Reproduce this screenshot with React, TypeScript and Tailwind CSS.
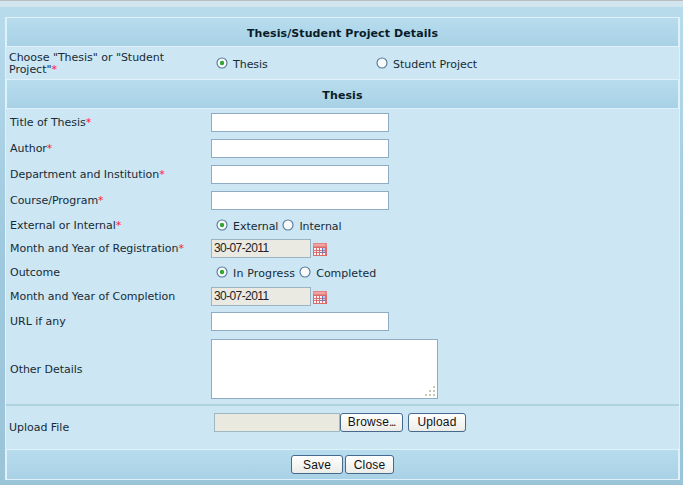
import type { ReactNode } from "react";

const BAND = "shrink-0 flex items-center justify-center bg-gradient-to-b from-[#b7dcee] to-[#a9d1e5] border border-[#dff2fb]";

function Radio({ checked = false }: { checked?: boolean }) {
  return (
    <svg className="shrink-0" width="12" height="12" viewBox="0 0 12 12">
      <circle cx="6" cy="6" r="5" fill="#f8fafa" stroke="#54779a" strokeWidth="1.1" />
      {checked && <circle cx="6" cy="6" r="2.2" fill="#35a535" />}
    </svg>
  );
}

function Calendar() {
  return (
    <svg className="ml-[2px] mt-[3px] shrink-0" width="14" height="13" viewBox="0 0 14 13">
      <rect width="14" height="13" fill="#d96c6c" />
      <rect width="14" height="4" fill="#e58484" />
      <rect x="1" y="1" width="11" height="2" fill="#f0a3a0" />
      <path d="M1 5h2v2H1zM4 5h2v2H4zM7 5h2v2H7zM1 8h2v1H1zM4 8h2v1H4zM7 8h2v1H7zM1 10h2v2H1zM4 10h2v2H4zM7 10h2v2H7zM10 10h2v2h-2z" fill="#fff5f5" />
      <path d="M10 5h2v2h-2zM10 8h2v1h-2z" fill="#c3c9ee" />
      <path d="M9 5h1v5H9zM7 9h5v1H7z" fill="#7476b5" />
    </svg>
  );
}

function Row({ label, required, height, children }: { label: string; required?: boolean; height: string; children: ReactNode }) {
  return (
    <div className={`flex shrink-0 items-center ${height}`}>
      <div className="w-[205px] shrink-0 pt-[2px] pl-[4px] whitespace-nowrap">
        {label}
        {required && <span className="text-[#ff1a35]">*</span>}
      </div>
      {children}
    </div>
  );
}

function TextBox() {
  return <input className="block h-[19px] w-[178px] border border-[#8eacc4] bg-white outline-none" />;
}

function DateBox() {
  return (
    <>
      <div className="flex h-[19px] w-[100px] items-center border border-[#9bb3c2] bg-[#eaeae2] pl-[2px] font-['Liberation_Sans',sans-serif] text-[12px] leading-none tracking-[-0.6px] text-[#222]">
        30-07-2011
      </div>
      <Calendar />
    </>
  );
}

function Button({ children, width }: { children: ReactNode; width: string }) {
  return (
    <button className={`h-[19px] shrink-0 rounded-[3px] border border-[#47698d] bg-gradient-to-b from-white to-[#ececE8] font-['Liberation_Sans',sans-serif] text-[12px] leading-none tracking-[0.2px] text-[#111] ${width}`}>
      {children}
    </button>
  );
}

export default function App() {
  return (
    <div className="flex h-[485px] w-[683px] flex-col overflow-hidden bg-gradient-to-b from-[#b9dcec] via-[#9fc9de] to-[#9bc4d8] font-['DejaVu_Sans',Verdana,sans-serif] text-[11px] leading-[12px] tracking-[-0.03px] text-[#172b36]">
      <div className="h-px shrink-0 bg-[#b9bdbf]" />
      <div className="h-[6px] shrink-0 bg-[#d2e5ef]" />
      <main className="mt-[10px] ml-[5px] flex h-[463px] w-[675px] shrink-0 flex-col border-x border-[#dff2fb] bg-[#cce6f3]">
        <h1 className={`h-[30px] pt-[3px] font-bold tracking-[0.1px] text-[#091c28] ${BAND}`}>Thesis/Student Project Details</h1>
        <section className="flex h-[32px] shrink-0 items-center">
          <div className="w-[210px] shrink-0 pt-[2px] pl-[3px]">
            Choose "Thesis" or "Student<br />Project"<span className="text-[#ff1a35]">*</span>
          </div>
          <div className="flex w-[160px] items-center gap-[5px]">
            <Radio checked />
            <span className="pt-[4px]">Thesis</span>
          </div>
          <div className="flex items-center gap-[5px]">
            <Radio />
            <span className="pt-[4px]">Student Project</span>
          </div>
        </section>
        <h2 className={`h-[30px] pt-[4px] font-bold tracking-[0.1px] text-[#091c28] ${BAND}`}>Thesis</h2>
        <section className="flex h-[295px] shrink-0 flex-col">
          <Row label="Title of Thesis" required height="h-[26px]"><TextBox /></Row>
          <Row label="Author" required height="h-[26px]"><TextBox /></Row>
          <Row label="Department and Institution" required height="h-[26px]"><TextBox /></Row>
          <Row label="Course/Program" required height="h-[26px]"><TextBox /></Row>
          <Row label="External or Internal" required height="h-[23px]">
            <div className="flex items-center pl-[5px]">
              <Radio checked />
              <span className="pt-[4px] pr-[4px] pl-[5px]">External</span>
              <Radio />
              <span className="pt-[4px] pl-[5px]">Internal</span>
            </div>
          </Row>
          <Row label="Month and Year of Registration" required height="h-[24px]"><DateBox /></Row>
          <Row label="Outcome" height="h-[24px]">
            <div className="flex items-center pl-[5px] tracking-[0.14px]">
              <Radio checked />
              <span className="pt-[4px] pr-[4px] pl-[5px]">In Progress</span>
              <Radio />
              <span className="pt-[4px] pl-[5px] tracking-normal">Completed</span>
            </div>
          </Row>
          <Row label="Month and Year of Completion" height="h-[24px]"><DateBox /></Row>
          <Row label="URL if any" height="h-[26px]"><TextBox /></Row>
          <Row label="Other Details" height="h-[70px]">
            <div className="flex h-[60px] w-[227px] items-end justify-end border border-[#8eacc4] bg-white p-[2px]">
              <svg width="10" height="10" viewBox="0 0 10 10">
                <path d="M8 0h2v2H8zM4 4h2v2H4zM8 4h2v2H8zM0 8h2v2H0zM4 8h2v2H4zM8 8h2v2H8z" fill="#c9c6b4" />
              </svg>
            </div>
          </Row>
        </section>
        <section className="flex h-[45px] shrink-0 items-center border-t-2 border-[#afd2e0]">
          <div className="w-[208px] shrink-0 pl-[3px]">Upload File</div>
          <div className="flex items-center pb-[11px]">
            <div className="h-[19px] w-[126px] border border-[#9fb7c3] bg-[#e9e9df]" />
            <Button width="w-[63px]">Browse<span className="tracking-[-1.3px]">...</span></Button>
            <div className="w-[5px]" />
            <Button width="w-[58px]">Upload</Button>
          </div>
        </section>
        <footer className={`h-[31px] gap-[2px] ${BAND}`}>
          <Button width="w-[52px]">Save</Button>
          <Button width="w-[49px]">Close</Button>
        </footer>
      </main>
    </div>
  );
}
